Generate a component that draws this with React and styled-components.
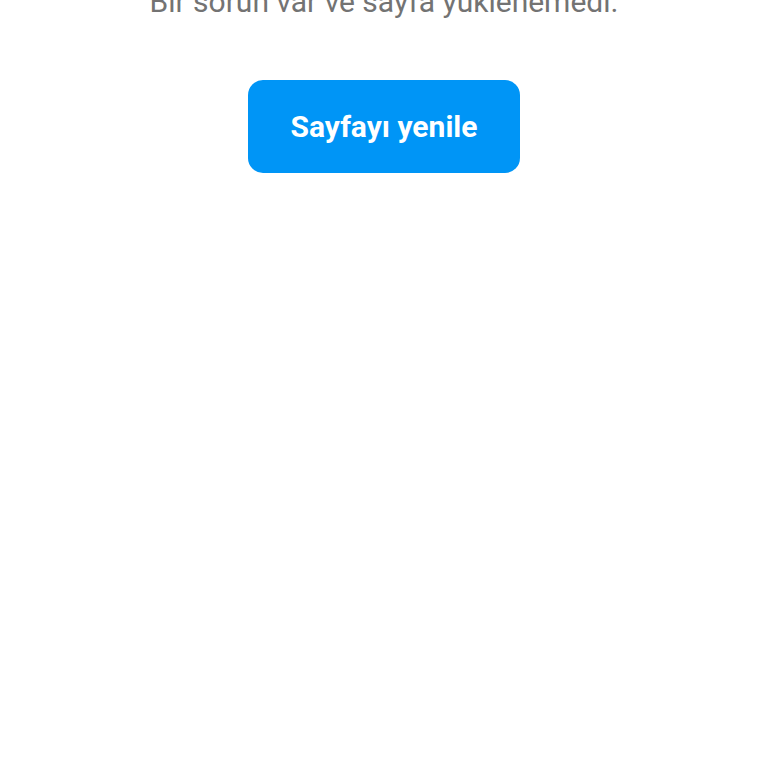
import React from 'react';
import styled, {createGlobalStyle} from 'styled-components';

const GlobalStyle = createGlobalStyle`
  html, body {
    margin: 0;
    padding: 0;
    background: #ffffff;
  }
  body {
    font-family: Roboto, "Liberation Sans", Arial, sans-serif;
    overflow: hidden;
  }
`;

const Page = styled.main`
  display: flex;
  flex-direction: column;
  align-items: center;
  width: 768px;
  height: 768px;
  overflow: hidden;
`;

const Message = styled.p`
  margin: -14px 0 0;
  font-size: 30px;
  line-height: 32px;
  color: #737373;
  text-align: center;
  white-space: nowrap;
`;

const ReloadButton = styled.button`
  margin-top: 62px;
  width: 272px;
  height: 93px;
  border: none;
  border-radius: 15px;
  background: #0095f6;
  color: #ffffff;
  font-family: Roboto, "Liberation Sans", Arial, sans-serif;
  font-size: 30px;
  font-weight: 700;
  cursor: pointer;
`;

const App = () => {
   return (
      <Page>
         <GlobalStyle/>
         <Message>Bir sorun var ve sayfa yüklenemedi.</Message>
         <ReloadButton onClick={() => window.location.reload()}>Sayfayı yenile</ReloadButton>
      </Page>
   );
};

export default App;
